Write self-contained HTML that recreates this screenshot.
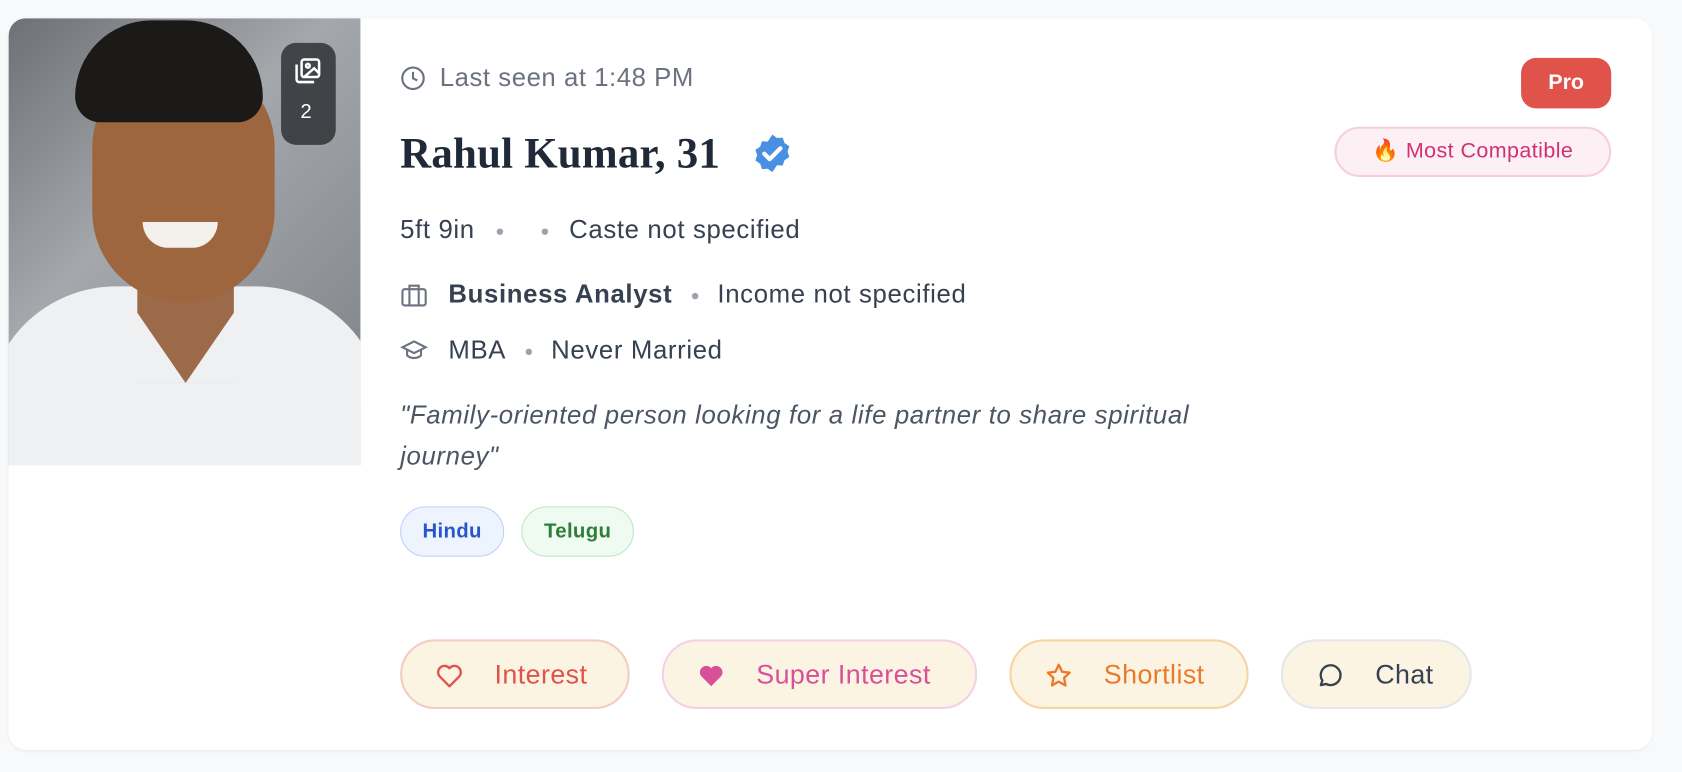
<!DOCTYPE html>
<html><head><meta charset="utf-8"><style>
*{box-sizing:border-box;margin:0;padding:0}
html,body{width:1682px;height:772px;overflow:hidden;background:#f8f9fb;font-family:"Liberation Sans",sans-serif}
#w{width:1568px;height:720px;transform:scale(1.0727);transform-origin:0 0;position:relative}
.card{position:absolute;left:8px;top:17px;width:1532px;height:682px;background:#fff;border-radius:16px;box-shadow:0 1px 3px rgba(0,0,0,.06);overflow:hidden}
.photo{position:absolute;left:0;top:0;width:328px;height:417px;background:linear-gradient(135deg,#6d7175,#a4a8ac 40%,#7b7f83);overflow:hidden;border-top-left-radius:16px}
.a{position:absolute}
.t{position:absolute;white-space:nowrap;letter-spacing:.5px}
.dot{display:inline-block;width:6px;height:6px;border-radius:3px;background:#9ca3af;vertical-align:middle;margin:0 18px}
.tag{position:absolute;top:455px;height:47px;border-radius:24px;font-size:19px;font-weight:bold;line-height:45px;text-align:center;letter-spacing:.3px}
.btn{position:absolute;top:579px;height:65px;border-radius:33px;background:#fcf4e3;font-size:25px;line-height:63px;border:2px solid;letter-spacing:.4px}
.btn svg{position:absolute;left:30px;top:19px}
.btn span{position:absolute;top:0}
</style></head><body><div id="w">
<div class="card">
 <div class="photo">
  <div class="a" style="left:-20px;top:250px;width:370px;height:260px;background:#eef0f1;border-radius:120px 120px 0 0"></div>
  <div class="a" style="left:120px;top:230px;width:90px;height:110px;background:#9c6a48"></div>
  <div class="a" style="left:110px;top:260px;width:110px;height:80px;background:#eef0f1;clip-path:polygon(0 0,50% 100%,100% 0,100% 100%,0 100%)"></div>
  <div class="a" style="left:78px;top:40px;width:170px;height:225px;background:#9e663f;border-radius:80px 80px 85px 85px"></div>
  <div class="a" style="left:62px;top:2px;width:175px;height:95px;background:#1c1a18;border-radius:90px 90px 30px 30px"></div>
  <div class="a" style="left:125px;top:190px;width:70px;height:24px;background:#f4f1ec;border-radius:0 0 35px 35px"></div>
  <div class="a" style="left:254px;top:23px;width:51px;height:95px;background:rgba(40,44,48,.8);border-radius:14px"></div>
  <svg class="a" style="left:265px;top:35px" width="28" height="28" viewBox="0 0 24 24" fill="none" stroke="#fff" stroke-width="2"><rect x="7" y="3" width="14" height="14" rx="2"/><path d="M3 7v12a2 2 0 0 0 2 2h12"/><circle cx="12" cy="8" r="1.5"/><path d="M21 14l-4-4-8 7"/></svg>
  <div class="t" style="left:272px;top:77px;color:#fff;font-size:19px">2</div>
 </div>
 <svg class="a" style="left:365px;top:44px" width="24" height="24" viewBox="0 0 24 24" fill="none" stroke="#6b7280" stroke-width="2"><circle cx="12" cy="12" r="10"/><path d="M12 6v6l4 2"/></svg>
 <div class="t" style="left:402px;top:42px;font-size:24px;color:#6b7280;letter-spacing:.5px">Last seen at 1:48 PM</div>
 <div class="t" style="left:365px;top:102px;font-size:40px;font-weight:bold;color:#1f2937;font-family:'Liberation Serif',serif;letter-spacing:.2px">Rahul Kumar, 31</div>
 <svg class="a" style="left:692px;top:106px" width="40" height="40" viewBox="0 0 24 24"><path fill="#4a90e2" d="M12 1.5l2.6 1.9 3.2-.2 1 3 2.7 1.8-1 3 1 3-2.7 1.8-1 3-3.2-.2L12 22.5l-2.6-1.9-3.2.2-1-3-2.7-1.8 1-3-1-3 2.7-1.8 1-3 3.2.2z"/><path d="M7.5 12.2l3 3 6-6" fill="none" stroke="#fff" stroke-width="2.4" stroke-linecap="round" stroke-linejoin="round"/></svg>
 <div class="a" style="left:1410px;top:37px;width:84px;height:47px;background:#e0534a;border-radius:14px;color:#fff;font-size:20px;font-weight:bold;line-height:47px;text-align:center">Pro</div>
 <div class="a" style="left:1236px;top:101px;width:258px;height:47px;background:#fdf0f5;border:2px solid #f7cde0;border-radius:24px;color:#d0326f;font-size:20px;line-height:43px;text-align:center;letter-spacing:.4px">🔥 Most Compatible</div>
 <div class="t" style="left:365px;top:184px;font-size:24px;color:#374151;letter-spacing:.6px">5ft 9in<span class="dot" style="margin:0 18px 0 20px"></span><span class="dot" style="margin:0 20px 0 18px"></span>Caste not specified</div>
 <svg class="a" style="left:364px;top:245px" width="28" height="26" viewBox="0 0 24 24" fill="none" stroke="#6b7280" stroke-width="1.8"><rect x="2" y="7" width="20" height="14" rx="2"/><path d="M8 7V4h8v3M8 7v14M16 7v14"/></svg>
 <div class="t" style="left:410px;top:244px;font-size:24px;color:#374151;letter-spacing:.6px"><b style="font-weight:600">Business Analyst</b><span class="dot"></span>Income not specified</div>
 <svg class="a" style="left:364px;top:297px" width="28" height="26" viewBox="0 0 24 24" fill="none" stroke="#6b7280" stroke-width="1.8"><path d="M2 9l10-5 10 5-10 5z"/><path d="M6 11v5c3 3 9 3 12 0v-5"/></svg>
 <div class="t" style="left:410px;top:296px;font-size:24px;color:#374151;letter-spacing:.6px">MBA<span class="dot"></span>Never Married</div>
 <div class="a" style="left:365px;top:352px;width:830px;font-size:24px;line-height:38px;font-style:italic;color:#4b5563;letter-spacing:.6px">"Family-oriented person looking for a life partner to share spiritual journey"</div>
 <div class="tag" style="left:365px;width:97px;background:#eef4fe;border:1px solid #bcd3f5;color:#2a55c8">Hindu</div>
 <div class="tag" style="left:478px;width:105px;background:#effaf1;border:1px solid #bfe6c6;color:#2f7d3a">Telugu</div>
 <div class="btn" style="left:365px;width:214px;border-color:#f6cbc3;color:#e0534a"><svg width="28" height="26" viewBox="0 0 24 24" fill="none" stroke="#e0534a" stroke-width="2" stroke-linejoin="round"><path d="M12 21l-8.5-8.6A5 5 0 0 1 12 5.5a5 5 0 0 1 8.5 6.9z"/></svg><span style="left:86px">Interest</span></div>
 <div class="btn" style="left:609px;width:294px;border-color:#f4d2e6;color:#d9509a"><svg width="28" height="26" viewBox="0 0 24 24" fill="#d9509a"><path d="M12 21l-8.5-8.6A5 5 0 0 1 12 5.5a5 5 0 0 1 8.5 6.9z"/></svg><span style="left:86px">Super Interest</span></div>
 <div class="btn" style="left:933px;width:223px;border-color:#f8d4a2;color:#ea7a2a"><svg width="28" height="26" viewBox="0 0 24 24" fill="none" stroke="#ea7a2a" stroke-width="2" stroke-linejoin="round"><path d="M12 2.5l2.9 6 6.5.8-4.8 4.5 1.2 6.5L12 17l-5.8 3.3 1.2-6.5L2.6 9.3l6.5-.8z"/></svg><span style="left:86px">Shortlist</span></div>
 <div class="btn" style="left:1186px;width:178px;border-color:#e6e7ea;color:#374151"><svg width="28" height="26" viewBox="0 0 24 24" fill="none" stroke="#374151" stroke-width="2" stroke-linejoin="round"><path d="M4 20l1.3-3.9A8.5 8.5 0 1 1 8.5 19z"/></svg><span style="left:86px">Chat</span></div>
</div>
</div></body></html>
